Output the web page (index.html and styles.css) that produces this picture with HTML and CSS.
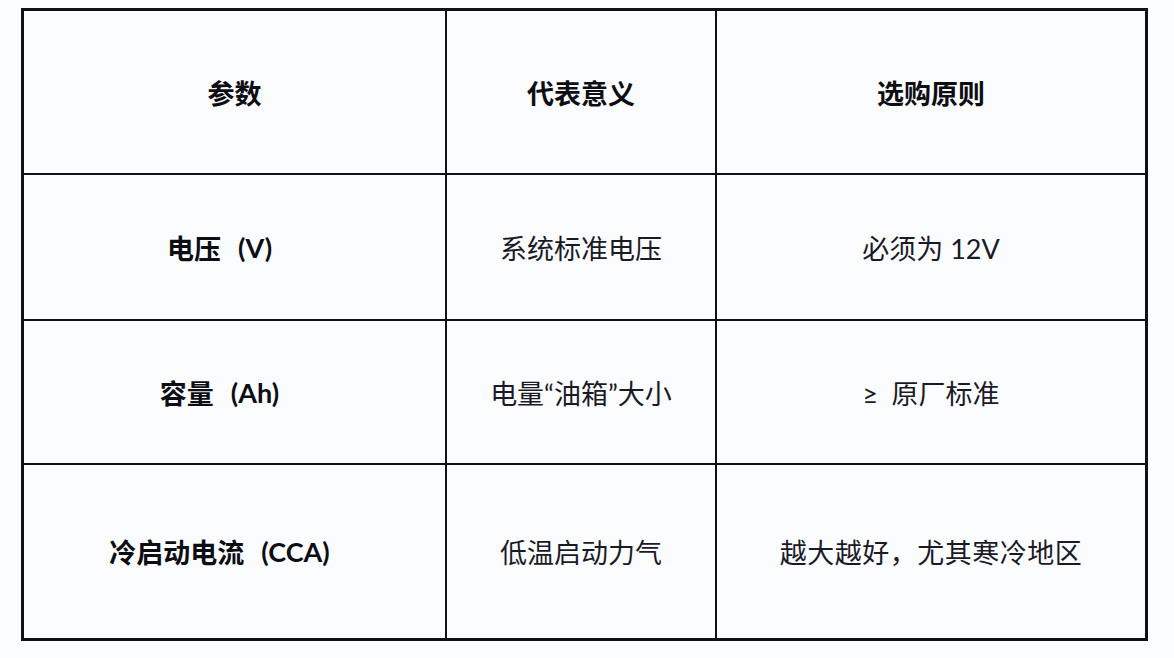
FILE: index.html
```html
<!DOCTYPE html>
<html lang="zh-CN">
<head>
<meta charset="utf-8">
<title>蓄电池参数</title>
<link rel="stylesheet" href="styles.css">
</head>
<body>
<div class="page">
  <div class="table">
    <div class="cell head">参数</div>
    <div class="cell head">代表意义</div>
    <div class="cell head">选购原则</div>

    <div class="cell key">电压<span class="unit">(V)</span></div>
    <div class="cell">系统标准电压</div>
    <div class="cell">必须为 12V</div>

    <div class="cell key">容量<span class="unit">(Ah)</span></div>
    <div class="cell">电量“油箱”大小</div>
    <div class="cell">≥&ensp;原厂标准</div>

    <div class="cell key">冷启动电流<span class="unit">(CCA)</span></div>
    <div class="cell">低温启动力气</div>
    <div class="cell wide">越大越好，尤其寒冷地区</div>
  </div>
</div>
</body>
</html>
```
FILE: styles.css
```css
html, body {
  margin: 0;
  padding: 0;
  background: #fbfcfe;
}
.page {
  padding: 8px 0 0 21px;
}
.table {
  width: 1127px;
  box-sizing: border-box;
  display: grid;
  grid-template-columns: 421px 268px 428px;
  grid-template-rows: 162px 144px 142px 173px;
  gap: 2px;
  padding: 3px;
  background: #101018;
}
.cell {
  background: #fbfcfe;
  display: flex;
  align-items: center;
  justify-content: center;
  font-family: Lato, "Noto Sans CJK SC", sans-serif;
  font-size: 27px;
  color: #1a1a26;
  white-space: nowrap;
}
.head, .key {
  font-weight: 700;
  color: #0d0d14;
}
.key {
  padding-right: 30px;
}
.unit {
  margin-left: 17px;
}
.wide {
  letter-spacing: 0.5px;
}
```
